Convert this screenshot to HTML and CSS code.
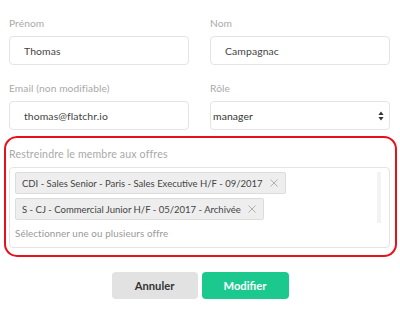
FILE: index.html
```html
<!DOCTYPE html>
<html lang="fr">
<head>
  <meta charset="UTF-8" />
  <title>Modifier le membre</title>
  <link rel="stylesheet" href="styles.css">
</head>
<body>
  <form class="member-form">
    <div class="row">
      <div class="form-group">
        <label for="firstname">Prénom</label>
        <input type="text" id="firstname" value="Thomas" />
      </div>
      <div class="form-group">
        <label for="lastname">Nom</label>
        <input type="text" id="lastname" value="Campagnac" />
      </div>
    </div>

    <div class="row">
      <div class="form-group">
        <label for="email">Email (non modifiable)</label>
        <input type="text" id="email" value="thomas@flatchr.io" readonly />
      </div>
      <div class="form-group">
        <label for="role">Rôle</label>
        <div class="select">
          <span>manager</span>
          <svg class="select-arrows" width="6" height="10" viewBox="0 0 6 10">
            <path d="M3 0.5 L5.6 4 L0.4 4 Z M3 9.5 L5.6 6 L0.4 6 Z" fill="#333" />
          </svg>
        </div>
      </div>
    </div>

    <div class="highlight">
      <label class="label-wide">Restreindre le membre aux offres</label>
      <div class="multiselect">
        <div class="tags">
          <span class="tag">CDI - Sales Senior - Paris - Sales Executive H/F - 09/2017
            <svg class="tag-remove" width="8" height="8" viewBox="0 0 8 8"><path d="M0.5 0.5 L7.5 7.5 M7.5 0.5 L0.5 7.5" stroke="#b0b0b0" stroke-width="1" /></svg>
          </span>
          <span class="tag">S - CJ - Commercial Junior H/F - 05/2017 - Archivée
            <svg class="tag-remove" width="8" height="8" viewBox="0 0 8 8"><path d="M0.5 0.5 L7.5 7.5 M7.5 0.5 L0.5 7.5" stroke="#b0b0b0" stroke-width="1" /></svg>
          </span>
        </div>
        <div class="placeholder">Sélectionner une ou plusieurs offre</div>
      </div>
    </div>

    <div class="buttons">
      <button type="button" class="btn btn-cancel">Annuler</button>
      <button type="submit" class="btn btn-submit">Modifier</button>
    </div>
  </form>
</body>
</html>
```

FILE: styles.css
```css
:root {
  --label-color: #a9a9a9;
  --text-color: #444;
  --border-color: #e4e4e4;
  --green: #1bc98e;
  --red: #e8101a;
}

* {
  box-sizing: border-box;
  margin: 0;
  padding: 0;
}

body {
  font-family: 'Lato', 'Open Sans', sans-serif;
  background: #fff;
  color: var(--text-color);
  width: 400px;
  height: 309px;
  overflow: hidden;
}

.member-form {
  padding: 16px 10px 0 9px;
}

.row {
  display: grid;
  grid-template-columns: 180px 180px;
  column-gap: 21px;
  margin-bottom: 16px;
}

label {
  display: block;
  font-size: 10.2px;
  line-height: 14px;
  letter-spacing: 0.1px;
  color: var(--label-color);
  margin-bottom: 6px;
}

.label-wide {
  font-size: 10.6px;
  letter-spacing: 0.15px;
}

input[type="text"] {
  display: block;
  width: 100%;
  height: 29px;
  padding: 0 14px;
  border: 1px solid var(--border-color);
  border-radius: 4px;
  font-family: inherit;
  font-size: 10.4px;
  letter-spacing: 0.1px;
  color: var(--text-color);
  outline: none;
}

.select {
  display: flex;
  align-items: center;
  justify-content: space-between;
  height: 29px;
  padding: 0 5px 0 2px;
  border: 1px solid var(--border-color);
  border-radius: 4px;
  font-size: 10.4px;
  letter-spacing: 0.1px;
  color: #333;
}

.highlight {
  margin: -10px -7px 0 -5px;
  padding: 9px 5px 7px 3px;
  border: 2px solid var(--red);
  border-radius: 13px;
}

.multiselect {
  position: relative;
  height: 81px;
  padding: 4px 6px 0 5px;
  border: 1px solid var(--border-color);
  border-radius: 4px;
}

.multiselect::after {
  content: "";
  position: absolute;
  top: 4px;
  right: 8px;
  width: 4px;
  height: 51px;
  background: #f3f3f3;
}

.tags {
  display: flex;
  flex-direction: column;
  align-items: flex-start;
  gap: 4px;
}

.tag {
  display: inline-flex;
  align-items: center;
  height: 22px;
  padding: 0 7px 0 6px;
  background: #eee;
  border: 1px solid #dcdcdc;
  border-radius: 2px;
  font-size: 9.5px;
  color: var(--text-color);
  white-space: nowrap;
}

.tag-remove {
  margin-left: 7px;
}

.placeholder {
  margin-top: 7px;
  font-size: 9.8px;
  letter-spacing: 0.1px;
  color: #999;
}

.buttons {
  display: flex;
  justify-content: center;
  gap: 4px;
  margin-top: 15px;
  padding-left: 1px;
}

.btn {
  height: 27px;
  border: none;
  border-radius: 4px;
  font-family: inherit;
  font-size: 11.2px;
  font-weight: 700;
  cursor: pointer;
}

.btn-cancel {
  width: 86px;
  background: #e2e2e2;
  color: #333;
}

.btn-submit {
  width: 87px;
  background: var(--green);
  color: #fff;
}
```
